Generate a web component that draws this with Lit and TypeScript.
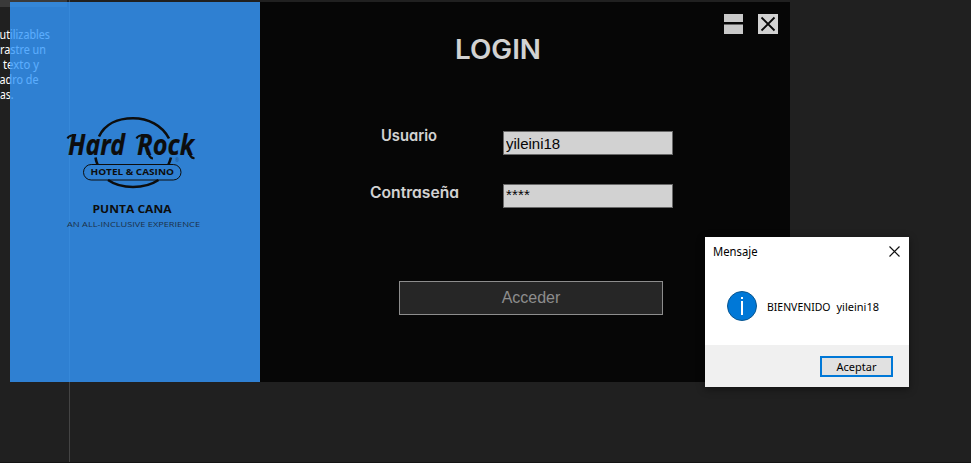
import { LitElement, html, css } from "lit";
import { customElement } from "lit/decorators.js";

@customElement("brand-logo")
class BrandLogo extends LitElement {
  static styles = css`
    :host { display: block; width: 140px; height: 118px; }
    svg { display: block; }
    .ink { fill: none; stroke: #090909; }
    text { fill: #090909; font-family: "Open Sans", sans-serif; }
    .script { font: italic 700 28px "Noto Sans", sans-serif; stroke: #090909; stroke-width: .2; }
    .kind { font-size: 8.2px; font-weight: 700; }
    .place { font-size: 9.8px; font-weight: 700; }
    .tag { font-size: 7.5px; fill: #1c3450; }
    .reg { font-size: 5px; opacity: .4; }
  `;
  render() {
    return html`<svg width="140" height="118" viewBox="63 114 140 118">
      <path class="ink" stroke-width="2.600" d="M99 136.500C105 124 118 118.300 133 118.300S162 125 169 138.500M95.500 157.500Q96 161 97.500 164.500M171 157.500Q170 161 168.500 164.500M108 180Q118 187 133 187T158.500 180"/>
      <rect class="ink" x="83.500" y="164.500" width="97.500" height="15.500" rx="7.700"/>
      <text class="script" x="68" y="154.500" textLength="57" lengthAdjust="spacingAndGlyphs">Hard</text>
      <text class="script" x="137" y="154.500" textLength="57" lengthAdjust="spacingAndGlyphs">Rock</text>
      <path class="ink" stroke-width="2.200" d="M67.500 138.500Q69 135 76 135M136.500 138.500Q138 135 145 135M147.500 150Q149 158.500 153 158.500M189 151Q190 158.500 194.500 158"/>
      <text class="reg" x="175" y="162">®</text>
      <text class="kind" x="90.500" y="175" textLength="83.500" lengthAdjust="spacingAndGlyphs">HOTEL &amp; CASINO</text>
      <text class="place" x="92.500" y="212.500" textLength="79" lengthAdjust="spacingAndGlyphs">PUNTA CANA</text>
      <text class="tag" x="67" y="226.500" textLength="133" lengthAdjust="spacingAndGlyphs">AN ALL-INCLUSIVE EXPERIENCE</text>
    </svg>`;
  }
}

@customElement("message-box")
class MessageBox extends LitElement {
  static styles = css`
    :host { display: flex; flex-direction: column; box-sizing: border-box; width: 204px; height: 150px; background: #fff; color: #000; font: 12px "Noto Sans", sans-serif; box-shadow: 0 2px 8px rgba(0,0,0,.45); }
    svg { display: block; }
    .bar { display: flex; justify-content: space-between; padding: 8px 9px 0 8px; height: 22px; }
    .title { line-height: 15px; }
    .close { margin-top: 1px; }
    .body { flex: 1; display: flex; gap: 10px; padding: 24px 0 0 22px; }
    .foot { display: flex; justify-content: flex-end; box-sizing: border-box; height: 42px; padding: 11px 16px 0 0; background: #f0f0f0; }
    .ok { box-sizing: border-box; width: 73px; height: 21px; border: 2px solid #0078d7; background: #e1e1e1; font: 11px/17px "Noto Sans", sans-serif; text-align: center; padding: 0; color: #000; }
  `;
  render() {
    return html`
      <div class="bar"><span class="title"><svg width="46" height="18"><text x="0" y="11" font-size="12" textLength="44.500" lengthAdjust="spacingAndGlyphs">Mensaje</text></svg></span>
        <svg class="close" width="11" height="11"><path d="M.5.5l10 10M10.500.5l-10 10" stroke="#111" stroke-width="1.200"/></svg></div>
      <div class="body">
        <svg width="30" height="30"><circle cx="15" cy="15" r="14.500" fill="#0078d7" stroke="#0a568f"/><path d="M15 10v14" stroke="#fff" stroke-width="2"/><path d="M15 6v2" stroke="#fff" stroke-width="2"/></svg>
        <svg width="115" height="32"><text x="0" y="20" font-size="11" textLength="63.500" lengthAdjust="spacingAndGlyphs">BIENVENIDO</text><text x="69.500" y="20" font-size="11" textLength="42.500" lengthAdjust="spacingAndGlyphs">yileini18</text></svg>
      </div>
      <div class="foot"><button class="ok">Aceptar</button></div>`;
  }
}

@customElement("login-window")
class LoginWindow extends LitElement {
  static styles = css`
    :host { display: flex; width: 780px; height: 380px; background: #000; opacity: .8; color: #fff; font-family: Inter, sans-serif; font-feature-settings: "cv11"; }
    svg { display: block; overflow: visible; }
    .side { width: 250px; box-sizing: border-box; padding: 112px 0 0 53px; background: #3399ff; }
    .main { flex: 1; display: flex; flex-direction: column; }
    .top { display: flex; height: 82px; box-sizing: border-box; padding: 12px 12px 0 195px; }
    .heading { margin: 19px 0 0; width: 269px; font-size: 26.5px; line-height: 34px; font-weight: 600; }
    .controls { display: flex; gap: 15px; }
    .fields { padding-top: 47px; height: 107px; display: flex; flex-direction: column; }
    .row { display: grid; grid-template-columns: 243px 170px; height: 53px; }
    .label { margin-top: -6px; margin-left: 97px; }
    .input { box-sizing: border-box; width: 170px; height: 24px; border: 1px solid #7a7a7a; background: #fff; color: #000; font: 15px/22px "Liberation Sans", sans-serif; padding: 0 2px; outline: 0; }
    .secret { padding-bottom: 3px; letter-spacing: .15px; }
    .enter { box-sizing: border-box; width: 264px; height: 34px; margin: 43px 0 0 139px; border: 1px solid #a9a9a9; background: #282828; color: #a9a9a9; font: 16px "Liberation Sans", sans-serif; padding: 0; }
  `;
  render() {
    return html`
      <aside class="side"><brand-logo></brand-logo></aside>
      <section class="main">
        <header class="top">
          <h1 class="heading"><svg width="90" height="34" fill="#fff"><text x="0" y="26" textLength="86" lengthAdjust="spacingAndGlyphs">LOGIN</text></svg></h1>
          <div class="controls">
            <svg width="19" height="20"><path fill="#f4f4f4" d="M0 0h19v20H0z"/><path fill="#000" d="M0 8h19v2.500H0z"/></svg>
            <svg width="20" height="20"><path fill="#fff" d="M0 0h20v20H0z"/><path d="M3.500 3.500l13 13M16.500 3.500l-13 13" stroke="#000" stroke-width="1.800"/></svg>
          </div>
        </header>
        <div class="fields">
          <div class="row"><svg class="label" width="100" height="22" fill="#fff"><text x="24" y="16" font-size="15.500" font-weight="600" textLength="56" lengthAdjust="spacingAndGlyphs">Usuario</text></svg><input class="input" .value=${"yileini18"}></div>
          <div class="row"><svg class="label" width="110" height="22" fill="#fff"><text x="13" y="20" font-size="15.500" font-weight="600" textLength="89" lengthAdjust="spacingAndGlyphs">Contraseña</text></svg><input class="input secret" .value=${"****"}></div>
        </div>
        <button class="enter">Acceder</button>
      </section>`;
  }
}

@customElement("app-root")
class AppRoot extends LitElement {
  static styles = css`
    :host { display: block; position: relative; box-sizing: border-box; width: 971px; height: 463px; background: #202020; overflow: hidden; border-bottom: 1px solid #131313; }
    .toolbox { box-sizing: border-box; width: 70px; height: 463px; border-right: 1px solid #444; color: #fff; font: 12px/15px "Noto Sans", sans-serif; }
    .tab { width: 67px; height: 7px; background: #3a3a3a; }
    .hint { display: flex; flex-direction: column; padding-top: 21px; }
    .line { display: block; overflow: visible; }
    .login { position: absolute; left: 10px; top: 2px; }
    .message { position: absolute; left: 705px; top: 237px; }
  `;
  render() {
    const lines: [string, number, number][] = [["utilizables", -0.5, 50.5], ["rastre un", 0, 46], ["texto y", 3, 36], ["adro de", -0.5, 39], ["as.", 0, 13.5]];
    return html`
      <aside class="toolbox"><div class="tab"></div><div class="hint">
        ${lines.map(([t, x, w]) => html`<svg class="line" width="68" height="15" fill="#fff"><text x=${x} y="11" textLength=${w} lengthAdjust="spacingAndGlyphs">${t}</text></svg>`)}
      </div></aside>
      <login-window class="login"></login-window>
      <message-box class="message"></message-box>`;
  }
}
